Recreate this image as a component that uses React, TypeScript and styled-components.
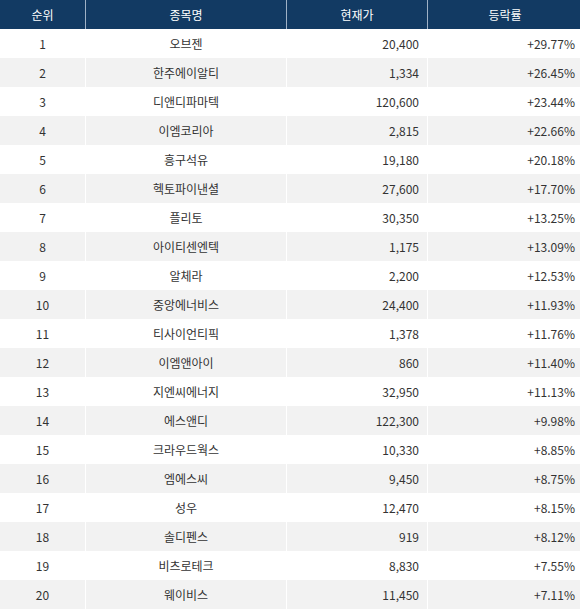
import React from 'react';
import styled, { createGlobalStyle } from 'styled-components';

const GlobalStyle = createGlobalStyle`
  html, body {
    margin: 0;
    padding: 0;
    background: #fff;
  }
  body {
    font-family: "Noto Sans CJK KR", "Noto Sans", sans-serif;
  }
`;

const ROWS: [number, string, string, string][] = [
  [1, '오브젠', '20,400', '+29.77%'],
  [2, '한주에이알티', '1,334', '+26.45%'],
  [3, '디앤디파마텍', '120,600', '+23.44%'],
  [4, '이엠코리아', '2,815', '+22.66%'],
  [5, '흥구석유', '19,180', '+20.18%'],
  [6, '헥토파이낸셜', '27,600', '+17.70%'],
  [7, '플리토', '30,350', '+13.25%'],
  [8, '아이티센엔텍', '1,175', '+13.09%'],
  [9, '알체라', '2,200', '+12.53%'],
  [10, '중앙에너비스', '24,400', '+11.93%'],
  [11, '티사이언티픽', '1,378', '+11.76%'],
  [12, '이엠앤아이', '860', '+11.40%'],
  [13, '지엔씨에너지', '32,950', '+11.13%'],
  [14, '에스앤디', '122,300', '+9.98%'],
  [15, '크라우드웍스', '10,330', '+8.85%'],
  [16, '엠에스씨', '9,450', '+8.75%'],
  [17, '성우', '12,470', '+8.15%'],
  [18, '솔디펜스', '919', '+8.12%'],
  [19, '비츠로테크', '8,830', '+7.55%'],
  [20, '웨이비스', '11,450', '+7.11%'],
];

const Table = styled.table`
  width: 579px;
  border-collapse: collapse;
  table-layout: fixed;
  font-size: 12px;
  color: #333;
`;

const HeadCell = styled.th<{ $w: number }>`
  width: ${({ $w }) => $w}px;
  height: 29px;
  padding: 0;
  background: #123a63;
  color: #fff;
  font-weight: 400;
  text-align: center;
  border-right: 1px solid #9fb1c6;
  &:last-child {
    border-right: none;
  }
`;

const Row = styled.tr<{ $alt: boolean }>`
  background: ${({ $alt }) => ($alt ? '#f2f2f2' : '#fff')};
`;

const Cell = styled.td<{ $align: 'center' | 'right' }>`
  height: 29px;
  padding: 0 ${({ $align }) => ($align === 'right' ? '8px' : '0')} 0 0;
  text-align: ${({ $align }) => $align};
  border-right: 1px solid #fff;
  &:last-child {
    border-right: none;
    padding-right: 7px;
  }
`;

export default function App() {
  return (
    <>
      <GlobalStyle />
      <Table>
        <thead>
          <tr>
            <HeadCell $w={85}>순위</HeadCell>
            <HeadCell $w={200}>종목명</HeadCell>
            <HeadCell $w={140}>현재가</HeadCell>
            <HeadCell $w={154}>등락률</HeadCell>
          </tr>
        </thead>
        <tbody>
          {ROWS.map(([rank, name, price, rate]) => (
            <Row key={rank} $alt={rank % 2 === 0}>
              <Cell $align="center">{rank}</Cell>
              <Cell $align="center">{name}</Cell>
              <Cell $align="right">{price}</Cell>
              <Cell $align="right">{rate}</Cell>
            </Row>
          ))}
        </tbody>
      </Table>
    </>
  );
}
